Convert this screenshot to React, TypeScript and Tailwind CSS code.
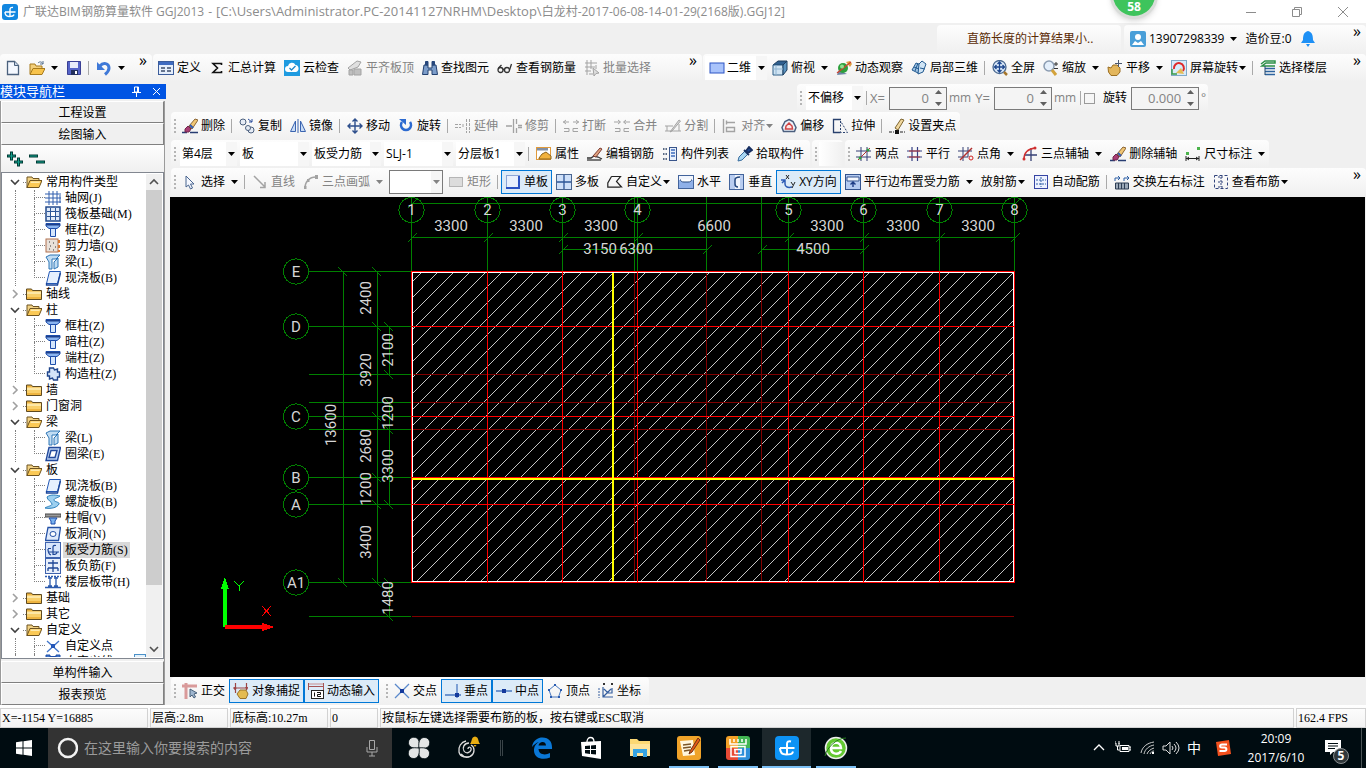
import type { ReactNode } from "react";
import { clsx } from "clsx";

const B = "#3a64b0";
const G = "#a3a3a3";

const icons: Record<string, ReactNode> = {
    newFile: <><path d="M2.500 1.500h7l4 4v9h-11z" fill="#f4f8ff" stroke="#4b617d" strokeWidth="1.300" /><path d="M9.500 1.500v4h4" fill="#c7d5e8" stroke="#4b617d" /></>,
    open: <><path d="M1 14V4h5l1 2h6v3" fill="#f3cf7a" stroke="#a87b1d" /><path d="M1 14.500l3-6h12l-3 6z" fill="#f7c34c" stroke="#a87b1d" /><path d="M9 3c2-2 4-1 5 1m0-3v3h-3" fill="none" stroke="#56718f" /></>,
    save: <><path d="M1.500 1.500h13v13h-13z" fill="#5564c8" stroke="#3a3f94" /><path d="M4 2h8v6H4z" fill="#e8ecfa" /><path d="M5 10h7v5H5z" fill="#222f5c" /><path d="M9 11h2v3H9z" fill="#fff" /></>,
    undo: <><path d="M4 6c3-4 9-3 9 2 0 3-1 4-4 6.500" fill="none" stroke="#3f79d8" strokeWidth="3" /><path d="M1 2v8h8z" fill="#3f79d8" /></>,
    define: <><rect x=".5" y="1.500" width="15" height="13" fill="#e5eefb" stroke="#3b5c9b" /><path d="M1 2h14v3H1z" fill="#3f6bc0" /><path d="M3 8h4M3 11h4M9 8h4M9 11h4" stroke="#3b4c6b" strokeWidth="1.500" /></>,
    sigma: <path d="M12.500 5V3.500H4l4.500 4.500L4 12.500h8.500V11" fill="none" stroke="#111" strokeWidth="1.600" />,
    cloud: <><rect width="16" height="16" fill="#1f9be0" /><path d="M4 12a3 3 0 0 1 0-6 4 4 0 0 1 7.500-1A3.600 3.600 0 0 1 12 12z" fill="#fff" /><path d="M5.500 8l2 2 4-4" fill="none" stroke="#1f86c8" strokeWidth="1.300" /></>,
    alignTop: <><path d="M1 8l9-7 4 1-3 5-8 3z" fill="#e0e0e0" stroke={G} /><path d="M2 10h4v5H2zM7 9h7v6H7z" fill="#c0c0c0" stroke={G} /></>,
    binoculars: <><path d="M2 5h4v3h4V5h4l1.500 9.500H10V10H6v4.500H.5z" fill="#7c9dca" stroke="#23406f" /><path d="M3.500 1.500h2.500v3.500H3.500zM10 1.500h2.500v3.500H10z" fill="#27477b" stroke="#27477b" /></>,
    glasses: <g fill="none" stroke="#333" strokeWidth="1.300"><circle cx="3.500" cy="10" r="2.500" /><circle cx="10" cy="10" r="2.500" /><path d="M6 9.500h1.500M1.500 8l3-3M12.500 10l2-6" /></g>,
    batch: <g fill="none" stroke={G}><path d="M3 0v15M7 0v9M1 3h12M1 7h10M1 11h6M5 14h4M12 5v4" /><path d="M9 8l6 5-3 .5L10 16z" fill="#ddd" /></g>,
    rect2d: <rect x="1" y="3" width="14" height="10" fill="#a9c3fb" stroke="#2c55c4" />,
    cube: <><path d="M1 5l5-4h9l-4 4z" fill="#2f5f8f" stroke="#1d3d5d" /><path d="M1 5h10v10H1z" fill="#cfe3f2" stroke="#2d5c85" /><path d="M11 5l4-4v9l-4 5z" fill="#5a93c0" stroke="#1d3d5d" /><path d="M4 5v10M1 9h10" stroke="#8fb4d1" /></>,
    orbit: <><path d="M1 15l2-5 8 4z" fill="#6d87a5" /><circle cx="7" cy="8" r="5" fill="#2da03c" /><path d="M10 2l4-1 2 3-2 3z" fill="#e0a040" /><path d="M1 13L15 2" stroke="#d04030" strokeWidth="1.300" /><circle cx="6" cy="6.500" r="2" fill="#8fe08f" /></>,
    local3d: <g fill="#9fc4e4" stroke="#235a90"><path d="M1 10l4-7 5 2-3 8z" /><path d="M8 4l3-3 4 3-3 8-5 2z" fill="#cfe4f5" /><path d="M3 7l5 2M7 3l-3 8M9 8l5 1" fill="none" /></g>,
    fullView: <><circle cx="7.500" cy="7" r="6.500" fill="#dceafa" stroke="#4b6a91" strokeWidth="1.300" /><path d="M7.500 2v10M2.500 7h10M5.500 4l2-2 2 2M5.500 10l2 2 2-2M4.500 5l-2 2 2 2M10.500 5l2 2-2 2" fill="none" stroke="#1c468e" strokeWidth="1.300" /><path d="M12 12l3 3" stroke="#a6762c" strokeWidth="2.500" /></>,
    zoom: <><circle cx="6" cy="6" r="5" fill="#e4effb" stroke="#8b9cb1" strokeWidth="1.500" /><path d="M9 10l4 5" stroke="#d3a23b" strokeWidth="3" /><path d="M11 4h4M13 2v4M11 8.500h4" stroke="#333" /></>,
    pan: <><path d="M1 7l3 1 2-3h4l3 3v4l-3 3.500H4L1.500 12z" fill="#e3b65c" stroke="#9b6f22" /><path d="M11.500 0v7M8 3.500h7" stroke="#4b5870" /></>,
    screenRotate: <><rect x=".5" y=".5" width="15" height="15" fill="#d7ebfa" stroke="#7fa9c8" /><path d="M3 9a5 5 0 1 1 9 2" fill="none" stroke="#df2a2a" strokeWidth="2" /><path d="M5 13l5-5 3 6z" fill="#e5bc53" /><path d="M1 9v5h5" fill="none" stroke="#3a9b48" strokeWidth="1.500" /></>,
    floors: <><path d="M1 4l4-3h10v2H6L2 6h13" fill="none" stroke="#2d9048" strokeWidth="1.500" /><path d="M5 8.500h10M5 11.500h10M5 14.500h10" stroke="#2c639f" strokeWidth="1.500" /><path d="M5 6v9" stroke="#24496f" /></>,
    erase: <><path d="M0 14.500h5M8 14.500h8" stroke="#273c72" strokeWidth="1.500" /><path d="M3 11l3-3 3 3-2 3H3z" fill="#a93c74" stroke="#70284d" /><path d="M7 8l6-7 3 1-6 9z" fill="#f1c674" stroke="#8a6534" /><path d="M8 7l3 3" stroke="#2f58b4" strokeWidth="2" /></>,
    copy: <g fill="#e6ecf5" stroke="#4c607e"><circle cx="4" cy="4" r="3" /><circle cx="12" cy="12" r="3" /><circle cx="9" cy="10" r="2.500" /><path d="M9 1l4 3m0-3v3h-3" fill="none" stroke="#2c4f9c" /></g>,
    mirror: <g fill="#c9dcf5" stroke={B}><path d="M.5 13.500L5.500 3v10.500zM15.500 13.500L10.500 3v10.500z" /><path d="M8 1v14" /></g>,
    move: <path d="M8 1v14M1 8h14M5.500 3.500L8 1l2.500 2.500M5.500 12.500L8 15l2.500-2.500M3.500 5.500L1 8l2.500 2.500M12.500 5.500L15 8l-2.500 2.500" fill="none" stroke="#2e4f8c" strokeWidth="1.400" />,
    rotate: <><path d="M4 4a5 5 0 1 0 8 0" fill="none" stroke="#2c6ad0" strokeWidth="2.600" /><path d="M1 1h7v6z" fill="#2c6ad0" /></>,
    extend: <path d="M0 6.500h6M0 9.500h6M11.500 1v14M14.500 1v14M8 6v4" fill="none" stroke={G} strokeDasharray="3 1" />,
    trim: <path d="M0 8h6M7.500 1v14M10.500 1v5M10.500 10v5M12 7.500h4M12 9.500h4" fill="none" stroke={G} strokeWidth="1.300" />,
    breakLine: <path d="M0 4h6M10 4h6M3 2L.5 4 3 6M13 2l2.500 2L13 6M1 10.500h5v3H1M15 10.500h-5v3h5" fill="none" stroke={G} />,
    merge: <path d="M0 4h6M10 4h6M4 2l2.500 2L4 6M12 2L9.500 4 12 6M1 10.500h5v3H1M15 10.500h-5v3h5" fill="none" stroke={G} />,
    split: <path d="M0 13h16M0 8h8M2 8v5M14 6v7M5 14l9-12 1.500 1L7 13z" fill="#ddd" stroke={G} />,
    align: <path d="M1.500 1v14M4 4.500h9M4.500 2.500v4M4.500 9.500h8v4h-8z" fill="none" stroke={G} strokeWidth="1.400" />,
    offset: <><path d="M8 1.500l4 2 3 6-1.500 4h-11L1 9.500l3-6z" fill="#edf2fa" stroke="#4b5f7e" strokeWidth="1.500" /><path d="M8 5l3 3 .5 3h-7L5 8z" fill="#fde5e5" stroke="#cf4444" strokeWidth="1.500" /></>,
    stretch: <><path d="M9 1.500H1.500v13h7" fill="none" stroke="#28406d" strokeWidth="1.300" /><path d="M8.500 3v11.500h7L8.500 3z" fill="none" stroke="#28406d" strokeDasharray="2 1.500" /></>,
    grip: <><path d="M0 14h5M11 14h5" stroke="#222" strokeDasharray="3 1" /><path d="M6 12h4v4H6z" fill="#111" /><path d="M6 10l6-9 3 1-6 10z" fill="#f0d79e" stroke="#7d6531" /></>,
    props: <><rect x=".5" y="1.500" width="14" height="12" fill="#fff" stroke="#e09a3a" /><path d="M1 2h11v2.500H1z" fill="#818fa5" /><path d="M3 12l3-4 4-2 5 4v3H3z" fill="#f1b13d" stroke="#8d641b" /></>,
    editBar: <><path d="M0 14h14" stroke="#333" strokeWidth="1.300" /><path d="M0 12h4l3-2 4 1 4 2" fill="none" stroke="#333" strokeWidth="1.300" /><path d="M6 10l7-8 2 1-6 8z" fill="#e0a27e" stroke="#7b3b32" /></>,
    partList: <><path d="M1 3h4M1 8h4M1 13h4" stroke="#5a6b85" strokeWidth="2" strokeDasharray="1.500 1" /><rect x="7.500" y="1.500" width="7" height="13" fill="#e8f0fb" stroke="#39558b" /><path d="M9 4h4M9 7h4M9 10h4" stroke="#3d6bbd" strokeWidth="1.500" /></>,
    dropper: <><path d="M1 15l1-4 6-6 3 3-6 6z" fill="#a9d6f3" stroke="#386d9e" /><path d="M7 4l5 5M9 5l3-4 3 3-4 3z" fill="#214a92" stroke="#182f61" strokeWidth="1.800" /></>,
    twoPoint: <><path d="M5 1v14M11 1v14M0 5h15M0 11h15" stroke="#353f74" /><path d="M2 14L14 2" stroke="#b03030" /><circle cx="4" cy="12" r="1.500" fill="#2d9f3b" /><circle cx="12" cy="4" r="1.500" fill="#2d9f3b" /></>,
    parallel: <><path d="M5 1v14M10.500 1v14M0 5h15M0 11h15" stroke="#353f84" strokeWidth="1.200" /><path d="M2 5h11M2 11h11" fill="none" stroke="#b93737" /></>,
    angle: <><path d="M5 1v14M10 1v10M0 5h14M0 11h10" stroke="#353f74" /><path d="M2 14L14 2" stroke="#b03030" strokeWidth="1.500" /><circle cx="13" cy="12" r="2" fill="none" stroke="#d02020" /></>,
    threeAxis: <><path d="M9 2v13M2 9h13" stroke="#353f74" strokeWidth="1.300" /><path d="M2 13c0-6 3-10 11-11" fill="none" stroke="#d03030" strokeWidth="1.400" /><circle cx="2" cy="13" r="1.500" fill="#d03030" /><circle cx="13" cy="2" r="1.500" fill="#d03030" /></>,
    dimension: <><path d="M1 10v5M14 10v5M1 12.500h13M4 11l-2 1.500L4 14M11 11l2 1.500-2 1.500" fill="none" stroke="#222" /><path d="M1 6h3v3H1zM12 1h3v3h-3z" fill="#4bb34b" /></>,
    cursor: <path d="M4 2v11l2.500-2 2 4 2-1-2-4h3.500z" fill="#f5f8ff" stroke="#48648e" />,
    line: <path d="M2 2l11 11M13 8v5.500H8" fill="none" stroke={G} strokeWidth="1.500" />,
    arc: <><path d="M2 14C2 8 6 3 13 3" fill="none" stroke={G} strokeWidth="1.500" /><path d="M1 12h2.500v3H1zM4 5h2.500v3H4zM12 1h3v4h-3z" fill={G} /></>,
    grayRect: <rect x="1.500" y="3.500" width="13" height="9" fill="#dcdcdc" stroke="#b5b5b5" />,
    single: <><rect x="1.500" y="1.500" width="13" height="13" fill="#e8f0fd" stroke="#8ba5d6" /><path d="M14 2v12H1" fill="none" stroke="#2a52c4" strokeWidth="2" /></>,
    multi: <><rect x=".5" y=".5" width="15" height="15" fill="#cfe0f8" stroke="#4a6590" /><path d="M8 1v14M1 8h14" stroke="#2d5596" strokeWidth="1.300" /></>,
    poly: <path d="M4.500 2.500h9l-4 5 5 5.500h-2M4.500 2.500L.8 9v4.200h12" fill="none" stroke="#222" strokeWidth="1.200" />,
    horiz: <><rect x=".5" y="1.500" width="15" height="13" fill="#8fb0e8" stroke="#42639b" /><path d="M1 2h14v4H1z" fill="#f2f6fd" /><path d="M2.500 5.500c0 2 1.500 2.500 3.500 2.500h4c2 0 3.500-.5 3.500-2.500" fill="#fff" stroke="#26487f" /></>,
    vert: <><rect x=".5" y=".5" width="14" height="15" fill="#b9cdf0" stroke="#42639b" /><path d="M6 1h5v14H6z" fill="#f2f6fd" /><path d="M11 3c-3 0-5 1-5 3v4c0 2 1 3 3 3" fill="none" stroke="#26487f" strokeWidth="1.500" /></>,
    xy: <><path d="M1 6h4v4c0 3 3 4 7 3M2 9l3-3" fill="none" stroke="#2c5bb5" strokeWidth="1.500" /><path d="M6 1l3 4M9 1L6 5M11 8l2 3M15 8l-3 6" stroke="#222" /></>,
    edgeBar: <><rect x=".5" y=".5" width="15" height="15" fill="#b4caf0" stroke="#33538f" /><path d="M2 3h12v4H2z" fill="#f4f7fd" stroke="#33538f" /><path d="M8 13V8M5.500 10.500L8 8l2.500 2.500" fill="none" stroke="#1d3c85" strokeWidth="1.400" /></>,
    autoBar: <><rect x="1.500" y="1.500" width="13" height="13" fill="#eef2ff" stroke="#3645a4" /><path d="M8 3v10M3 6h10M3 10h10" stroke="#2f5fa5" strokeDasharray="2 1" /></>,
    swap: <><path d="M1.500 15V9h13v6zM4.500 9v6M7.500 9v6M10.500 9v6" fill="#9daab9" stroke="#2c3c52" /><path d="M1 7V4h4M10 7V4h4M4 2l2 2-2 2M13 2l2 2-2 2" fill="none" stroke="#2c5fa5" /></>,
    viewBar: <><path d="M1.500 1.500h13v13h-13z" fill="none" stroke="#31437b" strokeDasharray="3 2" /><path d="M8 3v10M5 3h6M5 8h6M5 13h6" stroke="#31437b" strokeDasharray="2 1" /></>,
    ortho: <><path d="M0 3h15M4 0v16" stroke="#d99a9a" strokeWidth="3" /><path d="M8 6v8l2-2 2 3 1.500-1L12 11l3-1z" fill="#9fb6cf" stroke="#4b627c" /></>,
    snap: <><path d="M2.500 0v10M13.500 0v7M0 5h15" stroke="#9d4545" strokeWidth="1.200" /><path d="M1 4l3 1-3 2zM12 4h3l-1 3z" fill="#9d4545" /><path d="M4 11l3-4 6 0 2 4-2 4.500H7z" fill="#e4bb50" stroke="#98722a" /></>,
    dynInput: <><path d="M.5 0v7M15.500 0v7M1 3.500h14" stroke="#a65353" /><path d="M1 1h14" stroke="#c98e8e" /><rect x="3.500" y="7.500" width="12" height="8" fill="#fff" stroke="#222" /><path d="M6.500 9.500v4M9 9.500h3.500v2H9.500v2H13" fill="none" stroke="#111" /></>,
    cross: <><path d="M1 1l14 14M15 1L1 15" stroke="#5a89cc" strokeWidth="1.300" /><path d="M6 6h4v4H6z" fill="#143a9c" /></>,
    perp: <><path d="M0 12h16M12 1v14" stroke="#4a79c0" strokeWidth="1.300" /><path d="M10 10h4v4h-4z" fill="#143a9c" /></>,
    mid: <><path d="M0 8h16" stroke="#4a79c0" strokeWidth="1.500" /><path d="M6 6h4v4H6z" fill="#143a9c" /></>,
    vertex: <><path d="M8 2l6 5-2.500 7h-7L2 7z" fill="none" stroke="#4a79c0" /><path d="M7 1h2v2H7zM13 6h2v2h-2zM11 13h2v2h-2zM3 13h2v2H3zM1 6h2v2H1z" fill="#2a5cb0" /></>,
    coord: <><path d="M5 4v10h10M5 14l8-8M6 6l4 4h4V5" fill="none" stroke="#365f9f" strokeWidth="1.200" /><path d="M1 5v10" stroke="#365f9f" strokeDasharray="2 1" /><path d="M5 0h2v2H5zM13 0h2v2h-2z" fill="#333" /></>,
    folder: <><path d="M.5 13.500V3h5l1 1.500h9v9z" fill="#eeb440" stroke="#5f4a20" /><path d="M1 5.500h14v3H1z" fill="#fde7a6" /><path d="M1 8h14v3H1z" fill="#f9cf6a" /></>,
    folderOpen: <><path d="M1 14V3h5l1 1.500h6V7" fill="#f2d285" stroke="#6f5420" /><path d="M1 13.500l3-7h12l-3 7z" fill="#fbc956" stroke="#6f5420" /><path d="M5 7.500h9l-.5 1.500h-9z" fill="#fdeab0" /></>,
    grid: <path d="M4 1v14M8 1v14M12 1v14M0 4h14M0 8h16M0 12h16M15 3v10" stroke="#315fae" />,
    raft: <><rect x="1" y="1" width="14" height="14" fill="#dfeaf9" stroke="#234a8c" strokeWidth="1.500" /><path d="M5.500 2v12M10.500 2v12M2 5.500h12M2 10.500h12" stroke="#2c5698" /><path d="M6 6h4v4H6z" fill="#fff" /></>,
    column: <><path d="M1 1.500h14V4l-3 2.500H4L1 4z" fill="#8ab4f0" stroke="#1d4dab" /><path d="M1 2h14v1.500H1z" fill="#1d3f8b" /><path d="M5.500 6.500h5v8h-5z" fill="#d5e6fc" stroke="#1d4dab" /></>,
    wall: <><rect x="1" y="1" width="12" height="13" fill="#e9e1da" stroke="#b0714f" /><path d="M4 4h1M8 5h1M5 8h1M10 9h1M4 11h1M8 12h1" stroke="#333" /><path d="M14 2v3M14 7v3M14 12v2" stroke="#d97a32" strokeWidth="2" /></>,
    beam: <path d="M1 3l4-2h10l-4 4H7v10H4V8zM9 15V8l4-4v9z" fill="#c0dcf3" stroke="#2f76b6" />,
    slab: <><path d="M4.500 1.500h11l-3 12h-11z" fill="#e6f0fd" stroke="#2358b5" /><path d="M1.500 13v2h11l3-12" fill="none" stroke="#1b4699" strokeWidth="1.300" /></>,
    structCol: <path d="M4.500 2h4l1 2 3-1v3h2v5h-2v3h-4l-1-2-3 1v-3h-2V6h2z" fill="#d4e3f8" stroke="#1f458c" strokeWidth="1.400" />,
    ring: <path d="M4 1.500h11.500l-3 13H1zM6 4.500h6l-2 7H4z" fill="#bdd3f4" fillRule="evenodd" stroke="#234a9c" strokeWidth="1.400" />,
    spiral: <path d="M2 3c4-3 9-2 13-1-2 2-6 2-6 4s6 2 5 4c-2 4-9 5-14 4 3-2 7-2 7-4S2 6 2 3z" fill="#9dd0f0" stroke="#2b7fbb" />,
    cap: <><path d="M0 4h16v3H0z" fill="#9a9a9a" stroke="#444" /><path d="M4 8h8l-2 3v3H6v-3z" fill="#7ab2ef" stroke="#1d4dab" /></>,
    hole: <><path d="M3 1.500h12.500l-2 13H.5z" fill="#dfeafb" stroke="#2350a5" strokeWidth="1.300" /><ellipse cx="8" cy="8" rx="3" ry="2.500" fill="#fff" stroke="#2350a5" /></>,
    slabBar: <><rect x=".5" y=".5" width="15" height="15" fill="#d9e6fb" stroke="#3e62ad" /><path d="M3 6.500h3M6 13c-3-1-3-4-3-6M3 10h11M8 13V5q0-2 3-1.500M8 12.500c3 0 4-1 4-2.500" fill="none" stroke="#1d4596" strokeWidth="1.200" /></>,
    negBar: <><rect x=".5" y=".5" width="15" height="15" fill="#e8effb" stroke="#3e62ad" /><path d="M8 2v12M3 5h10M3 10h10M3 10v3M13 10v3" stroke="#1d4596" strokeWidth="1.300" /></>,
    band: <><path d="M0 2.500h16" stroke="#2c5aad" strokeWidth="1.300" strokeDasharray="2 1" /><path d="M0 13.500h16M5 3v10M11 3v10M3 12h4M9 12h4M3 4h4M9 4h4" stroke="#2c5aad" strokeWidth="1.300" /></>,
    customPoint: <><path d="M2 3l12 11M14 3L2 14" stroke="#3f74c9" strokeWidth="1.300" /><path d="M6 6h4v4H6z" fill="#2457b8" /></>,
    customLine: <path d="M1 1h4v3H1zM11 1h4v3h-4zM5 2.500h6" fill="#3f74c9" stroke="#1f4fa8" />,
    user: <><rect width="16" height="16" rx="2" fill="#4a9fd8" /><circle cx="8" cy="6" r="3" fill="#fff" /><path d="M2 14l3-4 3 2 3-2 3 4z" fill="#fff" /></>,
    bell: <path d="M8 0c4 1 5 4 5 9l2 3H1l2-3c0-5 1-8 5-9zM6 13h4l-2 3z" fill="#1e90f5" />,
};

function Icon({ name }: { name: string }) {
    return (
        <svg viewBox="0 0 16 16" className="h-4 w-4 shrink-0" aria-hidden="true">
            {icons[name]}
        </svg>
    );
}

function Caret({ className }: { className?: string }) {
    return (
        <svg viewBox="0 0 7 4" className={clsx("h-1 w-[7px] shrink-0", className)} aria-hidden="true">
            <path d="M0 0h7L3.500 4z" fill="currentColor" />
        </svg>
    );
}

interface ToolProps {
    icon?: string;
    label?: string;
    title?: string;
    arrow?: "split" | "tight";
    active?: boolean;
    disabled?: boolean;
}

function Tool({ icon, label, title, arrow, active, disabled }: ToolProps) {
    return (
        <button
            disabled={disabled}
            aria-label={label ?? title}
            className={clsx(
                "flex h-6 shrink-0 items-center gap-[3px] border px-[3px] whitespace-nowrap",
                active ? "border-[#0078d7] bg-[#dcebf8]" : "border-transparent",
                disabled ? "text-[#838383]" : "text-black",
            )}
        >
            {icon && <Icon name={icon} />}
            {label}
            {arrow && <Caret className={arrow === "split" ? "ml-[3px]" : "-ml-[2px]"} />}
        </button>
    );
}

function Sep() {
    return <span className="mx-[2px] h-[14px] w-[2px] shrink-0 border-l border-[#a9a9a9]" />;
}

function Grip() {
    return <span className="mr-[2px] ml-[3px] h-[14px] w-[2px] shrink-0 border-l-2 border-dotted border-[#b5b5b5]" />;
}

function More() {
    return <button aria-label="更多" className="mr-1 ml-auto self-start pr-px text-[16px] leading-3">»</button>;
}

function Bar({ className, children }: { className?: string; children: ReactNode }) {
    return (
        <div className={clsx("flex h-7 items-center rounded-sm bg-linear-to-b from-[#fdfdfd] to-[#f0f0f0]", className)}>
            {children}
        </div>
    );
}

function Combo({ label, value, width, icon, boxed }: { label: string; value: string; width: string; icon?: string; boxed?: boolean }) {
    return (
        <div
            className={clsx(
                "relative mr-px ml-[2px] flex h-6 shrink-0 items-center bg-white",
                boxed && "border border-[#7a7a7a] text-[#838383]",
                icon && "pl-1",
                width,
            )}
        >
            {icon && <Icon name={icon} />}
            <select aria-label={label} className="h-full w-full min-w-0 appearance-none bg-transparent pl-[2px] outline-none">
                <option>{value}</option>
            </select>
            <span className="pointer-events-none absolute inset-y-0 right-0 flex w-[11px] items-center justify-center bg-[#f6f6f6]">
                <Caret />
            </span>
        </div>
    );
}

function Spin({ id, value, width }: { id: string; value: string; width: string }) {
    return (
        <div className={clsx("flex h-[23px] items-center border border-[#7a7a7a] bg-[#f4f4f4]", width)}>
            <input id={id} defaultValue={value} className="w-full min-w-0 bg-transparent text-right text-[13px] text-[#838383] outline-none" />
            <span className="mr-1 ml-[6px] flex flex-col gap-2 text-[#606060]">
                <button aria-label="增加" className="rotate-180"><Caret /></button>
                <button aria-label="减少"><Caret /></button>
            </span>
        </div>
    );
}

const tree: { name: string; open?: boolean; items?: [string, string][] }[] = [
    { name: "常用构件类型", open: true, items: [["grid", "轴网(J)"], ["raft", "筏板基础(M)"], ["column", "框柱(Z)"], ["wall", "剪力墙(Q)"], ["beam", "梁(L)"], ["slab", "现浇板(B)"]] },
    { name: "轴线" },
    { name: "柱", open: true, items: [["column", "框柱(Z)"], ["column", "暗柱(Z)"], ["column", "端柱(Z)"], ["structCol", "构造柱(Z)"]] },
    { name: "墙" },
    { name: "门窗洞" },
    { name: "梁", open: true, items: [["beam", "梁(L)"], ["ring", "圈梁(E)"]] },
    { name: "板", open: true, items: [["slab", "现浇板(B)"], ["spiral", "螺旋板(B)"], ["cap", "柱帽(V)"], ["hole", "板洞(N)"], ["slabBar", "板受力筋(S)"], ["negBar", "板负筋(F)"], ["band", "楼层板带(H)"]] },
    { name: "基础" },
    { name: "其它" },
    { name: "自定义", open: true, items: [["customPoint", "自定义点"], ["customLine", "自定义线(X)"]] },
];

function Chevron({ dir, className }: { dir: "up" | "down" | "right"; className?: string }) {
    const d = { up: "M1 7l4-4 4 4", down: "M1 3l4 4 4-4", right: "M3 1l4 4-4 4" }[dir];
    return (
        <svg viewBox="0 0 10 10" className={clsx("h-[10px] w-[10px] shrink-0", className)} aria-hidden="true">
            <path d={d} fill="none" stroke="currentColor" strokeWidth="1.600" />
        </svg>
    );
}

function Tree() {
    return (
        <div className="flex min-h-0 flex-1 basis-0 overflow-hidden border border-[#828790] bg-white p-px">
            <ul className="min-w-0 flex-1 overflow-hidden font-['Liberation_Serif','Noto_Sans_CJK_SC',serif]">
                {tree.map((group) => (
                    <li key={group.name}>
                        <div className="flex h-4 items-center pl-[7px] leading-4 whitespace-nowrap">
                            <Chevron dir={group.open ? "down" : "right"} className={group.open ? "text-[#404040]" : "text-[#a0a0a0]"} />
                            <span className="ml-[3px] w-[3px] border-t border-dotted border-[#808080]" />
                            <Icon name={group.open ? "folderOpen" : "folder"} />
                            <span className="pl-1">{group.name}</span>
                        </div>
                        {group.items && (
                            <ul>
                                {group.items.map(([icon, name], i) => (
                                    <li key={name} className="flex h-4 items-center pl-3 leading-4 whitespace-nowrap">
                                        <span className="h-4 w-[19px] shrink-0 border-l border-dotted border-[#808080]" />
                                        <span className="flex w-[11px] shrink-0 flex-col">
                                            <span className="h-2 border-b border-l border-dotted border-[#808080]" />
                                            <span className={clsx("h-2", i < group.items!.length - 1 && "border-l border-dotted border-[#808080]")} />
                                        </span>
                                        <Icon name={icon} />
                                        <span className={clsx("ml-[2px] px-[2px]", name === "板受力筋(S)" && "bg-[#d9d9d9]")}>{name}</span>
                                        {name === "自定义线(X)" && <span className="ml-auto h-4 w-3 border border-[#4a90c8] bg-[#e3f1fb]" />}
                                    </li>
                                ))}
                            </ul>
                        )}
                    </li>
                ))}
            </ul>
            <div className="flex w-4 flex-col items-center bg-[#f0f0f0] text-[#505050]">
                <Chevron dir="up" className="my-[3px]" />
                <span className="w-full flex-[396] bg-[#cdcdcd]" />
                <span className="flex-[56]" />
                <Chevron dir="down" className="my-[3px]" />
            </div>
        </div>
    );
}

function PanelButton({ children }: { children: ReactNode }) {
    return (
        <button className="h-[22px] shrink-0 border border-t-white border-r-[#808080] border-b-[#808080] border-l-white bg-[#f0f0f0] pt-px">
            {children}
        </button>
    );
}

function Sidebar() {
    return (
        <aside className="mr-1 flex w-[166px] shrink-0 flex-col">
            <div className="flex h-[15px] shrink-0 items-center bg-[#0054e3] text-[13px] leading-[15px] text-white">
                模块导航栏
                <svg viewBox="0 0 9 11" className="mr-[11px] ml-auto h-[11px] w-[9px]" aria-hidden="true">
                    <path d="M2.500 1h4v5h-4zM5.500 1v5M0 6.500h9M4.500 7v4" fill="none" stroke="#fff" />
                </svg>
                <svg viewBox="0 0 9 9" className="mr-[5px] h-[9px] w-[9px]" aria-hidden="true">
                    <path d="M1 1l7 7M8 1L1 8" stroke="#fff" />
                </svg>
            </div>
            <div className="mt-[2px] mr-px flex min-h-0 flex-1 flex-col border-r border-l border-[#9a9a9a]">
                <PanelButton>工程设置</PanelButton>
                <PanelButton>绘图输入</PanelButton>
                <div className="flex h-[27px] shrink-0 items-center gap-[6px] bg-linear-to-b from-[#fdfdfd] to-[#f0f0f0] px-[6px]">
                    <svg viewBox="0 0 16 16" className="h-4 w-4" aria-hidden="true">
                        <path d="M0 5h9M4.500 .5v9M7 11h9M11.500 6.500v9" stroke="#003b34" strokeWidth="3" />
                        <path d="M1 5h7M4.500 1.500v7M8 11h7M11.500 7.500v7" stroke="#12a08c" />
                    </svg>
                    <svg viewBox="0 0 16 16" className="h-4 w-4" aria-hidden="true">
                        <path d="M0 5h9M7 11h9" stroke="#003b34" strokeWidth="3" />
                        <path d="M1 5h7M8 11h7" stroke="#12a08c" />
                    </svg>
                </div>
                <Tree />
                <div className="h-[2px]" />
                <PanelButton>单构件输入</PanelButton>
                <PanelButton>报表预览</PanelButton>
            </div>
        </aside>
    );
}

// Axis grid of the floor plan, in window pixels
const cols = [
    { x: 411.5, name: "1" }, { x: 487.5, name: "2" }, { x: 562.5, name: "3" }, { x: 637.5, name: "4" },
    { x: 788.5, name: "5" }, { x: 863.5, name: "6" }, { x: 939.5, name: "7" }, { x: 1014.5, name: "8" },
];
const subCols = [634.5, 706.5, 761.5];
const rows = [
    { y: 271.5, name: "E" }, { y: 326.5, name: "D" }, { y: 416.5, name: "C" },
    { y: 477.5, name: "B" }, { y: 504.5, name: "A" }, { y: 582.5, name: "A1" },
];
const subRows = [374.5, 402.5, 429.5, 616.5];
const topDims: [number, number, string][] = [
    [451, 226, "3300"], [526, 226, "3300"], [601, 226, "3300"], [714, 226, "6600"], [827, 226, "3300"], [903, 226, "3300"],
    [978, 226, "3300"], [600, 249, "3150"], [636, 249, "6300"], [813, 249, "4500"], [714, 192, "26400"],
];
const sideDims: [number, number, string][] = [
    [366, 298, "2400"], [366, 370, "3920"], [366, 446, "2680"], [366, 489, "1200"], [366, 542, "3400"],
    [388, 350, "2100"], [388, 413, "1200"], [388, 466, "3300"], [388, 598, "1480"], [331, 425, "13600"],
];
const topTicks = [...cols.map((c) => [c.x, 237.5]), [411.5, 203.5], [1014.5, 203.5], [562.5, 249.5], [634.5, 249.5], [706.5, 249.5], [761.5, 249.5], [863.5, 249.5]];
const sideTicks = [
    [343.5, 271.5], [343.5, 582.5], ...rows.map((r) => [377.5, r.y]),
    [389.5, 326.5], [389.5, 374.5], [389.5, 402.5], [389.5, 429.5], [389.5, 504.5], [389.5, 582.5], [389.5, 616.5],
];
const hatch = Array.from({ length: 57 }, (_, i) => 694 + i * 16);

// The plotter draws its axis bubbles as 16-sided rings
function ring(cx: number, cy: number) {
    return Array.from({ length: 16 }, (_, i) => {
        const a = (i * Math.PI) / 8;
        return `${cx + 12.7 * Math.cos(a)},${cy + 12.7 * Math.sin(a)}`;
    }).join(" ");
}

function Drawing() {
    return (
        <svg className="block min-h-0 w-full flex-1 border-r border-[#f0f0f0] bg-black" role="img" aria-label="板受力筋平面图">
            <defs>
                <clipPath id="slab-area">
                    <rect x="412" y="272" width="602" height="310" />
                </clipPath>
            </defs>
            <g transform="translate(-170 -197)" shapeRendering="crispEdges" fill="none">
                <g clipPath="url(#slab-area)" stroke="#c4c4c4">
                    {hatch.map((c) => <line key={c} x1={c - 582} y1="582" x2={c - 272} y2="272" />)}
                </g>
                <g stroke="#008000">
                    {cols.map((c) => <line key={c.x} x1={c.x} y1="197" x2={c.x} y2="271" />)}
                    {subCols.map((x) => <line key={x} x1={x} y1="197" x2={x} y2="271" />)}
                    {rows.map((r) => <line key={r.y} x1="309" y1={r.y} x2="411" y2={r.y} />)}
                    {subRows.map((y) => <line key={y} x1="309" y1={y} x2="411" y2={y} />)}
                    <path d="M411 203.500H1014M411 237.500H1014M562 249.500H706M761 249.500H863M343.500 271V582M377.500 271V582M389.500 326V374M389.500 402V504M389.500 582V616" />
                    {topTicks.map(([x, y]) => <line key={`${x}-${y}`} x1={x - 4} y1={y + 5} x2={x + 5} y2={y - 4} />)}
                    {sideTicks.map(([x, y]) => <line key={`${x}-${y}`} x1={x - 5} y1={y - 4} x2={x + 4} y2={y + 5} />)}
                    {cols.map((c) => <polygon key={c.name} points={ring(c.x, 210)} />)}
                    {rows.map((r) => <polygon key={r.name} points={ring(296, r.y)} />)}
                </g>
                <g stroke="#800000">
                    {subCols.map((x) => <line key={x} x1={x} y1="272" x2={x} y2="582" />)}
                    {subRows.map((y) => <line key={y} x1="412" y1={y} x2="1014" y2={y} />)}
                </g>
                <path d="M412.500 582V272.500H1013.500V581.500H412" stroke="#fff" />
                <g stroke="#f00">
                    {cols.map((c) => <line key={c.x} x1={c.x} y1="271" x2={c.x} y2="583" />)}
                    {rows.map((r) => <line key={r.y} x1="411" y1={r.y} x2="1015" y2={r.y} />)}
                </g>
                <path d="M613 273V581M412 479H1014" stroke="#ff0" strokeWidth="2" />
                <path d="M225 627V585" stroke="#0f0" strokeWidth="4" />
                <path d="M225 577l4 12h-8z" fill="#0f0" />
                <path d="M225 627H264" stroke="#f00" strokeWidth="4" />
                <path d="M274 627l-12-4v8z" fill="#f00" />
                <path d="M234 581l5 5 5-5M239 586v5" stroke="#0f0" />
                <path d="M262 606l9 10M271 606l-9 10" stroke="#f00" />
            </g>
            <g transform="translate(-170 -197)" fill="#d6d6d6" fontFamily="Roboto, sans-serif" fontSize="15" textAnchor="middle">
                {cols.map((c) => <text key={c.name} x={c.x} y="215">{c.name}</text>)}
                {rows.map((r) => <text key={r.name} x="296" y={r.y + 5}>{r.name}</text>)}
                {topDims.map(([x, y, t]) => <text key={`${x}-${y}`} x={x} y={y + 5}>{t}</text>)}
                {sideDims.map(([x, y, t]) => (
                    <text key={`${x}-${y}`} transform={`translate(${x + 5} ${y}) rotate(-90)`}>{t}</text>
                ))}
            </g>
        </svg>
    );
}

function TitleBar() {
    return (
        <header className="relative flex h-[23px] shrink-0 items-center bg-white text-[#8c8c8c]">
            <svg viewBox="0 0 16 16" className="mr-[5px] ml-[2px] h-4 w-4" aria-hidden="true">
                <rect width="16" height="16" rx="3" fill="#1287e0" />
                <path d="M3 8h10.500M8 13V5.500Q8 3 11 3.500M3 8c0 3 1.500 4.500 4 4.500s4.500 0 5-2" fill="none" stroke="#fff" strokeWidth="1.400" />
            </svg>
            <h1 className="flex items-center gap-1 whitespace-nowrap">
                <span>广联达BIM钢筋算量软件 GGJ2013</span>
                <span>-</span>
                <span><span className="text-[13px]">[C:\Users\Administrator.PC-20141127NRHM\Desktop\</span>白龙村-2017-06-08-14-01-29(2168版).GGJ12]</span>
            </h1>
            <div className="ml-auto flex">
                <button aria-label="最小化" className="flex w-[46px] justify-center">
                    <svg viewBox="0 0 10 10" className="h-[10px] w-[10px]"><path d="M0 5.500h10" stroke="#8c8c8c" /></svg>
                </button>
                <button aria-label="还原" className="flex w-[46px] justify-center">
                    <svg viewBox="0 0 10 10" className="h-[10px] w-[10px]"><path d="M.5 2.500h7v7h-7zM2.500 2V.5h7v7H8" fill="none" stroke="#8c8c8c" /></svg>
                </button>
                <button aria-label="关闭" className="flex w-[46px] justify-center">
                    <svg viewBox="0 0 10 10" className="h-[10px] w-[10px]"><path d="M0 0l10 10M10 0L0 10" stroke="#8c8c8c" /></svg>
                </button>
            </div>
            <div className="absolute -top-[29px] right-[208px] flex h-12 w-12 items-end justify-center rounded-full border-[3px] border-[#d9dcd9] bg-[#3ec45c] pb-px text-[12px] leading-4 font-bold text-white shadow-md">
                58
            </div>
        </header>
    );
}

function StatusBar() {
    const cell = "flex h-5 shrink-0 items-center border border-[#d2d2d2] pl-px whitespace-nowrap";
    return (
        <footer className="flex h-[23px] shrink-0 items-center gap-[2px] bg-linear-to-b from-white to-[#f2f2f2] pt-[2px] font-['Liberation_Serif','Noto_Sans_CJK_SC',serif]">
            <span className={clsx(cell, "w-[148px]")}>X=-1154 Y=16885</span>
            <span className={clsx(cell, "w-[78px]")}>层高:2.8m</span>
            <span className={clsx(cell, "w-[98px]")}>底标高:10.27m</span>
            <span className={clsx(cell, "w-12")}>0</span>
            <span className={clsx(cell, "flex-1")}>按鼠标左键选择需要布筋的板，按右键或ESC取消</span>
            <span className={clsx(cell, "w-[70px]")}>162.4 FPS</span>
        </footer>
    );
}

function Task({ label, running, active, children }: { label: string; running?: boolean; active?: boolean; children: ReactNode }) {
    return (
        <button aria-label={label} className={clsx("flex w-[49px] shrink-0 flex-col items-center justify-between", active && "bg-[#1d282c]")}>
            <svg viewBox="0 0 24 24" className="mt-2 h-6 w-6" aria-hidden="true">{children}</svg>
            {running && <span className={clsx("h-[2px] bg-[#7cc0f5]", active ? "w-full" : "w-10")} />}
        </button>
    );
}

function Taskbar() {
    return (
        <nav className="flex h-10 shrink-0 bg-[#000c11] text-white">
            <button aria-label="开始" className="flex w-12 items-center justify-center">
                <svg viewBox="0 0 16 16" className="h-4 w-4"><path d="M0 2.200L6.500 1.300V7.500H0zM7.500 1.200L16 0v7.500H7.500zM0 8.500h6.500v6.200L0 13.800zM7.500 8.500H16V16l-8.500-1.200z" fill="#fff" /></svg>
            </button>
            <div className="flex w-[344px] items-center bg-[#333] px-2">
                <svg viewBox="0 0 22 22" className="h-[22px] w-[22px] shrink-0"><circle cx="12" cy="11" r="9" fill="none" stroke="#f2f2f2" strokeWidth="2.500" /></svg>
                <input
                    aria-label="搜索"
                    placeholder="在这里输入你要搜索的内容"
                    className="min-w-0 flex-1 bg-transparent px-[6px] text-[14px] outline-none placeholder:text-[#9b9b9b]"
                />
                <svg viewBox="0 0 12 18" className="mr-[6px] h-[18px] w-3 shrink-0"><path d="M3.500 1.500h5v9h-5zM1 8v5h10V8M6 13v4M3 17h6" fill="none" stroke="#a8a8a8" /></svg>
            </div>
            <span className="w-[2px]" />
            <Task label="四叶草">
                <g fill="#e4e6e6" stroke="#000c11" strokeWidth=".8">
                    <path d="M12 12C6 13 1 11 1.500 6S8 0 11 3c2 3 1 6 1 9z" /><path d="M12 12c-1-6 1-11 6-10.500s6 6.500 3 9.500c-3 2-6 1-9 1z" />
                    <path d="M12 12c6-1 11 1 10.500 6s-6.500 6-9.500 3c-2-3-1-6-1-9z" /><path d="M12 12c1 6-1 11-6 10.500S0 16 3 13c3-2 6-1 9-1z" />
                </g>
            </Task>
            <Task label="浏览器">
                <path d="M12 13c0-3 4-2 3 1s-5 4-7 1 0-8 5-8M15 9c4 2 4 8 0 11s-11 1-12-4 2-10 7-11M17 18c-3 4-9 4-12 0" fill="none" stroke="#ddd" strokeWidth="1.300" />
                <path d="M14 8c2-2 1-7 5-7.500 4 .5 3 5.500 5 7.500zM17.500 9h3L19 11z" fill="#e9ae12" />
            </Task>
            <span className="mx-2 h-4 w-[3px] self-center border-x border-[#3a4448]" />
            <span className="w-[6px]" />
            <Task label="Edge">
                <path d="M2 11C3 4 8 1.500 12.500 1.500c7 0 10 5 9.500 11.500H8.500c.5 6 7 6.500 11.500 4v4.500c-8 3.500-16.500 0-16-8C4.500 9 7 7 9 6c-3 1-5 2.500-7 5zM8.500 9.500H16C16 4.500 9 5 8.500 9.500z" fill="#0a78d7" />
            </Task>
            <Task label="应用商店">
                <path d="M8 6c0-6 7-6 7 0" fill="none" stroke="#fff" strokeWidth="1.300" /><path d="M2 6l20-1v18L3 20z" fill="#fff" />
                <path d="M6 10l5-.5V13H6zM12 9.400l5-.4v4h-5zM6 14h5v4l-5-.7zM12 14h5v4.600l-5-.6z" fill="#000c11" />
            </Task>
            <Task label="文件资源管理器">
                <path d="M2 3h7l2 2h11v15H2z" fill="#fbd874" /><path d="M2 8h20v12H2z" fill="#fee49b" /><path d="M5 21v-8h14v8h-4v-4H9v4z" fill="#36a3e3" />
            </Task>
            <Task label="计价软件" running>
                <rect width="24" height="24" rx="3" fill="#f0a329" /><path d="M3 5l13-1 2 15-12 1z" fill="#fff6dd" /><path d="M6 9l8-1M6 12l8-1M7 15l6-1" stroke="#7b5528" strokeWidth="1.500" /><path d="M21 2l-8 13-1 3 3-2 8-12z" fill="#e55a17" stroke="#6f3013" />
            </Task>
            <Task label="算量软件" running>
                <path d="M0 3q0-3 3-3h9v12H0z" fill="#f3a128" /><path d="M12 0h9q3 0 3 3v9H12z" fill="#42b553" /><path d="M0 12h12v12H3q-3 0-3-3z" fill="#e84a35" /><path d="M12 12h12v9q0 3-3 3h-9z" fill="#2d8fd9" />
                <path d="M4 3v5h16V3M8 3v3M12 3v3M16 3v3M5 10.500h14v10H5zM8 13.500h8M9 17.500h6M9 14v4M15 14v4" fill="none" stroke="#fff" strokeWidth="1.500" />
            </Task>
            <Task label="钢筋算量" running active>
                <rect width="24" height="24" rx="4" fill="#0d93f5" />
                <path d="M5 12h14.500M12 18.500V8q0-3.500 4-2.500M5 12c0 4 2 6.500 6 6.500s6.500 0 7-3" fill="none" stroke="#fff" strokeWidth="2" />
            </Task>
            <Task label="安全浏览器" running>
                <circle cx="12" cy="12" r="10.500" fill="#64c832" stroke="#eee" strokeWidth="1.500" />
                <path d="M17 15c-2 4-10 4-10-3s10-7 10 0H8" fill="none" stroke="#fff" strokeWidth="2.500" /><path d="M1 20C3 11 13 2 22 2" fill="none" stroke="#237c1b" />
            </Task>
            <div className="ml-auto flex items-center">
                <button aria-label="显示隐藏的图标" className="w-6">
                    <svg viewBox="0 0 12 12" className="mx-auto h-3 w-3"><path d="M1 8l5-5 5 5" fill="none" stroke="#fff" strokeWidth="1.300" /></svg>
                </button>
                <svg viewBox="0 0 16 16" className="mx-1 h-4 w-4"><path d="M5 5.500h9v6H5zM14 7h2v3h-2M1 3v3h3V3M2.500 6v4h2M0 1v3M4 1v3" fill="none" stroke="#fff" /><path d="M7 7h6v3H7z" fill="#fff" /></svg>
                <svg viewBox="0 0 16 16" className="mx-[5px] h-4 w-4"><path d="M1 13C2 7 7 3 14 2M4 14c1-5 5-8 10-9M7 14c1-3 4-5 7-6M10 14c1-2 2-3 4-3" fill="none" stroke="#ccc" /><path d="M12 12h2v2h-2z" fill="#fff" /></svg>
                <svg viewBox="0 0 18 16" className="mx-px h-4 w-[18px]"><path d="M1 6h3l4-4v12l-4-4H1zM10 6q2 2 0 4M12 4q4 4 0 8M14 2q6 6 0 12" fill="none" stroke="#ddd" /></svg>
                <span className="mx-[6px] text-[14px]">中</span>
                <svg viewBox="0 0 16 16" className="mx-2 h-4 w-4"><path d="M1 2l13-2 2 14-13 2z" fill="#f4511e" /><path d="M12 4.500H7c-2.500 0-2.500 3 0 3h2.500c2.500 0 2.500 3.500 0 3.500H4.500" fill="none" stroke="#fff" strokeWidth="2" /></svg>
                <time className="mr-1 ml-1 w-[66px] text-center leading-[19px]">20:09<br />2017/6/10</time>
                <button aria-label="通知" className="relative mr-2 flex h-10 w-10 items-center justify-center">
                    <svg viewBox="0 0 16 16" className="h-4 w-4"><path d="M0 0h16v12H8l-3 3v-3H0z" fill="#fff" /><path d="M3 3.500h10M3 6h10M3 8.500h7" stroke="#000c11" /></svg>
                    <span className="absolute right-1 bottom-1 h-4 w-4 rounded-full border border-[#8a8f91] bg-[#30383b] text-center leading-[14px] font-bold">5</span>
                </button>
                <span className="mr-1 h-10 border-l border-[#4a5356]" />
            </div>
        </nav>
    );
}

export default function App() {
    return (
        <div className="flex h-screen flex-col overflow-hidden bg-[#f0f0f0] font-['Open_Sans','Noto_Sans_CJK_SC',sans-serif] text-[12px] leading-4 text-black">
            <TitleBar />

            {/* Account row */}
            <div className="flex h-[31px] shrink-0 items-center justify-end gap-[3px]">
                <Bar className="w-[184px] pl-[30px] text-[#5b2c06]">直筋长度的计算结果小..</Bar>
                <Bar className="w-[242px] pl-[2px]">
                    <Tool icon="user" label="13907298339" arrow="split" />
                    <Tool label="造价豆:0" />
                    <Tool icon="bell" title="消息" />
                    <More />
                </Bar>
            </div>

            {/* Main toolbars */}
            <div className="flex h-[30px] shrink-0 gap-px">
                <Bar className="w-[152px] shrink-0 pl-px">
                    <Tool icon="newFile" title="新建" />
                    <Tool icon="open" title="打开" arrow="split" />
                    <Tool icon="save" title="保存" />
                    <Sep />
                    <Tool icon="undo" title="撤销" arrow="split" />
                    <More />
                </Bar>
                <Bar className="w-[549px] shrink-0 pl-px">
                    <Tool icon="define" label="定义" />
                    <Tool icon="sigma" label="汇总计算" />
                    <Tool icon="cloud" label="云检查" />
                    <Tool icon="alignTop" label="平齐板顶" disabled />
                    <Tool icon="binoculars" label="查找图元" />
                    <Tool icon="glasses" label="查看钢筋量" />
                    <Tool icon="batch" label="批量选择" disabled />
                    <More />
                </Bar>
                <Bar className="min-w-0 flex-1">
                    <Combo label="视图模式" value="二维" icon="rect2d" width="w-[62px]" />
                    <Tool icon="cube" label="俯视" arrow="split" />
                    <Tool icon="orbit" label="动态观察" />
                    <Tool icon="local3d" label="局部三维" />
                    <Sep />
                    <Tool icon="fullView" label="全屏" />
                    <Tool icon="zoom" label="缩放" arrow="split" />
                    <Tool icon="pan" label="平移" arrow="split" />
                    <Tool icon="screenRotate" label="屏幕旋转" arrow="tight" />
                    <Sep />
                    <Tool icon="floors" label="选择楼层" />
                    <More />
                </Bar>
            </div>

            <div className="flex min-h-0 flex-1">
                <Sidebar />
                <main className="flex min-w-0 flex-1 flex-col">
                    {/* Offset input */}
                    <div className="flex shrink-0 pl-[627px]">
                        <Bar className="text-[#838383]">
                            <Grip />
                            <div className="text-black"><Combo label="偏移方式" value="不偏移" width="w-[57px]" /></div>
                            <Sep />
                            <label htmlFor="offset-x" className="mr-1 text-[13px]">X=</label>
                            <Spin id="offset-x" value="0" width="w-[58px]" />
                            <span className="mx-[2px]">mm</span>
                            <label htmlFor="offset-y" className="mr-1 ml-[2px] text-[13px]">Y=</label>
                            <Spin id="offset-y" value="0" width="w-[58px]" />
                            <span className="mx-[2px]">mm</span>
                            <Sep />
                            <input id="rotate" type="checkbox" className="h-[11px] w-[11px] appearance-none border border-[#9a9a9a] bg-[#f6f6f6]" />
                            <label htmlFor="rotate" className="mr-1 ml-2 text-black">旋转</label>
                            <Spin id="rotate-angle" value="0.000" width="w-[68px]" />
                            <label htmlFor="rotate-angle" className="mx-[2px]">°</label>
                        </Bar>
                    </div>

                    {/* Edit */}
                    <div className="flex shrink-0 pl-px">
                        <Bar>
                            <Grip />
                            <Tool icon="erase" label="删除" />
                            <Sep />
                            <Tool icon="copy" label="复制" />
                            <Tool icon="mirror" label="镜像" />
                            <Sep />
                            <Tool icon="move" label="移动" />
                            <Tool icon="rotate" label="旋转" />
                            <Sep />
                            <Tool icon="extend" label="延伸" disabled />
                            <Tool icon="trim" label="修剪" disabled />
                            <Sep />
                            <Tool icon="breakLine" label="打断" disabled />
                            <Tool icon="merge" label="合并" disabled />
                            <Tool icon="split" label="分割" disabled />
                            <Sep />
                            <Tool icon="align" label="对齐" arrow="tight" disabled />
                            <Tool icon="offset" label="偏移" />
                            <Tool icon="stretch" label="拉伸" />
                            <Sep />
                            <Tool icon="grip" label="设置夹点" />
                        </Bar>
                    </div>

                    {/* Component pickers and auxiliary axes */}
                    <div className="flex shrink-0 gap-[2px] pl-px">
                        <Bar className="pr-[2px]">
                            <Grip />
                            <Combo label="楼层" value="第4层" width="w-[57px]" />
                            <Combo label="构件大类" value="板" width="w-[69px]" />
                            <Combo label="构件类型" value="板受力筋" width="w-[69px]" />
                            <Combo label="构件" value="SLJ-1" width="w-[69px]" />
                            <Combo label="分层" value="分层板1" width="w-[69px]" />
                            <Sep />
                            <Tool icon="props" label="属性" />
                            <Tool icon="editBar" label="编辑钢筋" />
                            <Tool icon="partList" label="构件列表" />
                            <Tool icon="dropper" label="拾取构件" />
                        </Bar>
                        <Bar>
                            <Grip />
                            <span className="h-6 w-6 bg-linear-to-r from-white to-[#f0f0f0]" />
                        </Bar>
                        <Bar>
                            <Grip />
                            <Tool icon="twoPoint" label="两点" />
                            <Tool icon="parallel" label="平行" />
                            <Tool icon="angle" label="点角" arrow="split" />
                            <Tool icon="threeAxis" label="三点辅轴" arrow="split" />
                            <Tool icon="erase" label="删除辅轴" />
                            <Tool icon="dimension" label="尺寸标注" arrow="split" />
                        </Bar>
                    </div>

                    {/* Drawing tools */}
                    <div className="mb-px flex shrink-0 pl-px">
                        <Bar className="min-w-0 flex-1">
                            <Grip />
                            <Tool icon="cursor" label="选择" arrow="split" />
                            <Sep />
                            <Tool icon="line" label="直线" disabled />
                            <Tool icon="arc" label="三点画弧" arrow="split" disabled />
                            <Combo label="画弧参数" value="" width="w-[54px]" boxed />
                            <Tool icon="grayRect" label="矩形" disabled />
                            <Sep />
                            <Tool icon="single" label="单板" active />
                            <Tool icon="multi" label="多板" />
                            <Tool icon="poly" label="自定义" arrow="tight" />
                            <Tool icon="horiz" label="水平" />
                            <Tool icon="vert" label="垂直" />
                            <Tool icon="xy" label="XY方向" active />
                            <Tool icon="edgeBar" label="平行边布置受力筋" arrow="split" />
                            <Tool label="放射筋" arrow="tight" />
                            <Tool icon="autoBar" label="自动配筋" />
                            <Sep />
                            <Tool icon="swap" label="交换左右标注" />
                            <Tool icon="viewBar" label="查看布筋" arrow="tight" />
                            <More />
                        </Bar>
                    </div>

                    <Drawing />

                    {/* Snapping */}
                    <div className="flex shrink-0 pl-px">
                        <Bar className="pr-1">
                            <Grip />
                            <Tool icon="ortho" label="正交" />
                            <Tool icon="snap" label="对象捕捉" active />
                            <Tool icon="dynInput" label="动态输入" active />
                            <span className="w-1" />
                            <Grip />
                            <Tool icon="cross" label="交点" />
                            <Tool icon="perp" label="垂点" active />
                            <Tool icon="mid" label="中点" active />
                            <Tool icon="vertex" label="顶点" />
                            <Tool icon="coord" label="坐标" />
                        </Bar>
                    </div>
                </main>
            </div>

            <StatusBar />
            <Taskbar />
        </div>
    );
}
